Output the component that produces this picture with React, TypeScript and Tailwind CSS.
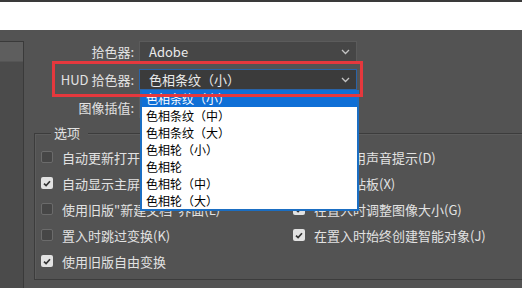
import React from "react";

function Chevron() {
  return (
    <svg width="9" height="6" viewBox="0 0 9 6" className="shrink-0">
      <polyline points="1,1 4.5,4.5 8,1" fill="none" stroke="#c4c4c4" strokeWidth="1.3" />
    </svg>
  );
}

function Box({ checked }: { checked: boolean }) {
  return checked ? (
    <span className="w-[12px] h-[12px] rounded-[2px] bg-[#e2e2e2] flex items-center justify-center shrink-0">
      <svg width="8" height="7" viewBox="0 0 8 7">
        <path d="M1 3.6 L3.1 5.6 L7 1.3" stroke="#333" strokeWidth="1.7" fill="none" />
      </svg>
    </span>
  ) : (
    <span className="w-[12px] h-[12px] rounded-[2px] bg-[#464646] border border-[#6b6b6b] shrink-0" />
  );
}

function Check({ checked, label }: { checked: boolean; label: string }) {
  return (
    <div className="h-[26px] flex items-center gap-[9px] whitespace-nowrap">
      <Box checked={checked} />
      <span className="text-[13px] text-[#e2e2e2] leading-none">{label}</span>
    </div>
  );
}

function Row({ label, value, hud }: { label: string; value: string; hud?: boolean }) {
  return (
    <div className="flex items-center h-[21px]">
      <div className="w-[110px] text-right text-[13px] text-[#e2e2e2] leading-none whitespace-nowrap">{label}</div>
      <div
        className={
          "ml-[5px] w-[218px] h-[21px] flex items-center justify-between pl-[9px] pr-[6px] border " +
          (hud ? "bg-[#3b3b3b] border-[#2a64a8]" : "bg-[#464646] border-[#5b5b5b]")
        }
      >
        <span className="text-[13px] text-[#eaeaea] leading-none whitespace-nowrap">{value}</span>
        <Chevron />
      </div>
    </div>
  );
}

const items = ["色相条纹（小）", "色相条纹（中）", "色相条纹（大）", "色相轮（小）", "色相轮", "色相轮（中）", "色相轮（大）"];

export default function App() {
  return (
    <div className="relative w-[522px] h-[288px] overflow-hidden bg-[#535353] font-['Noto_Sans_CJK_SC','Noto_Sans',sans-serif]">
      <div className="h-[2px] bg-[#3a3a3a]" />
      <div className="h-[28px] bg-white" />
      <div className="flex h-[258px]">
        <div className="w-[24px] mt-[11px] bg-[#4b4b4b] border-r border-t border-[#3a3a3a] shrink-0">
          <div className="h-[20px] bg-[#5e5e5e] border-b border-[#555]" />
        </div>
        <div className="flex-1 flex flex-col pt-[11px]">
          <div className="flex flex-col gap-[7px]">
            <Row label="拾色器:" value="Adobe" />
            <Row label="HUD 拾色器:" value="色相条纹（小）" hud />
            <Row label="图像插值:" value="两次立方（自动）" />
          </div>
          <div className="relative ml-[10px] mt-[15px] w-[520px] h-[147px] border border-[#3c3c3c] shadow-[inset_1px_1px_0_#5c5c5c]">
            <div className="absolute left-[16px] top-[-10px] bg-[#535353] pl-[3px] pr-[8px] text-[13px] text-[#e2e2e2] leading-[18px]">
              选项
            </div>
            <div className="grid grid-cols-[252px_1fr] pl-[6px] pt-[10px]">
              <div className="flex flex-col">
                <Check checked={false} label="自动更新打开的文档(A)" />
                <Check checked label="自动显示主屏幕(S)" />
                <Check checked={false} label={'使用旧版"新建文档"界面(L)'} />
                <Check checked={false} label="置入时跳过变换(K)" />
                <Check checked label="使用旧版自由变换" />
              </div>
              <div className="flex flex-col">
                <Check checked={false} label="完成后用声音提示(D)" />
                <Check checked={false} label="导出剪贴板(X)" />
                <Check checked label="在置入时调整图像大小(G)" />
                <Check checked label="在置入时始终创建智能对象(J)" />
              </div>
            </div>
          </div>
        </div>
      </div>

      <div className="absolute left-[140px] top-[90px] w-[219px] h-[121px] bg-white border-x-2 border-b-2 border-[#1b6ec2] z-10">
        {items.map((t, i) => (
          <div
            key={t}
            className={
              "h-[17px] flex items-center pl-[4px] text-[12px] leading-none whitespace-nowrap " +
              (i === 0 ? "bg-[#0f6fd6] text-white" : "text-black")
            }
          >
            {t}
          </div>
        ))}
      </div>

      <div className="absolute left-[52px] top-[61px] w-[311px] h-[36px] border-[3px] border-[#e5383d] z-20" />
    </div>
  );
}
